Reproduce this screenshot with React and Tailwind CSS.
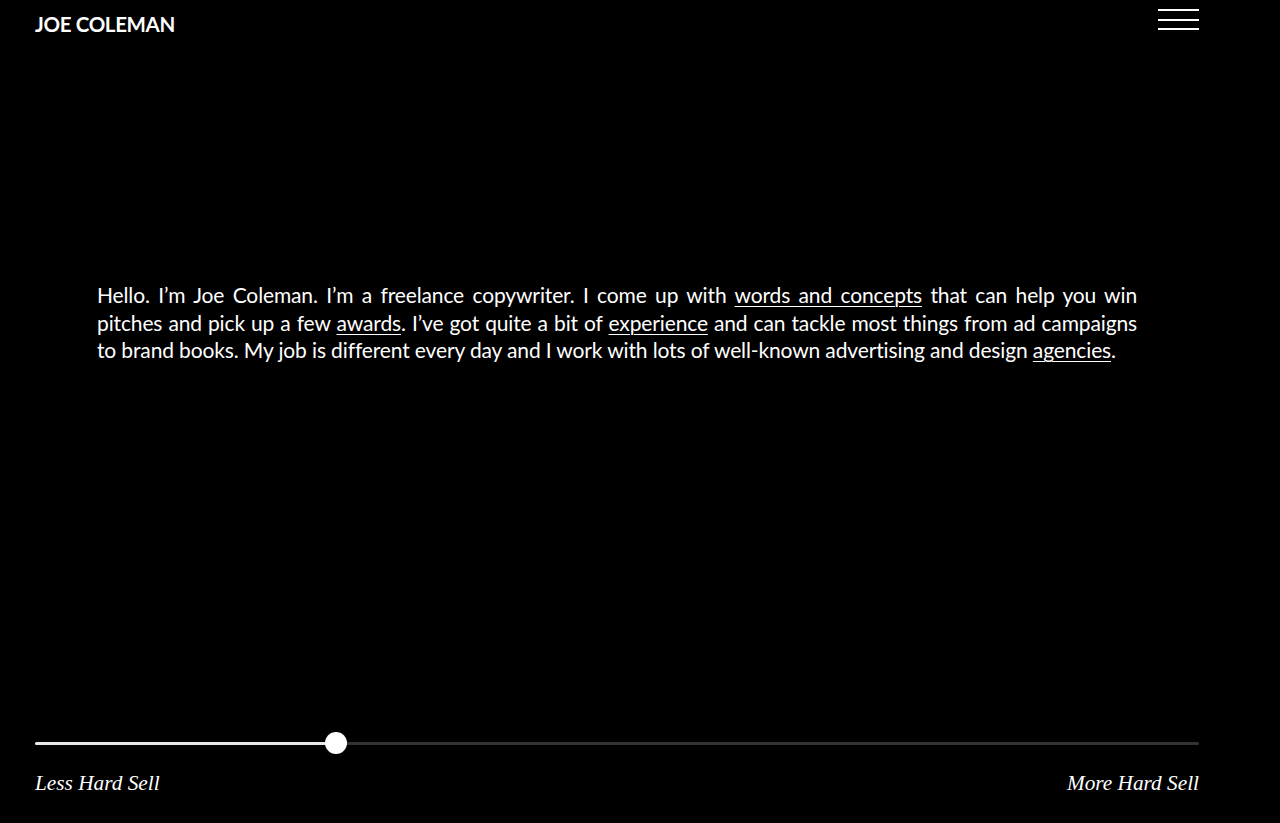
import React from "react";

const Link = ({ children }) => (
  <a href="#" className="underline underline-offset-[3px] decoration-1">
    {children}
  </a>
);

export default function App() {
  const value = 25.85; // percent

  return (
    <div className="h-[823px] w-full bg-black text-white flex flex-col overflow-hidden">
      <header className="flex items-start justify-between pl-[35px] pr-[81px]">
        <a href="#" className="mt-[11px] text-[20.5px] font-bold leading-[26px] tracking-[-0.35px] font-['Lato','Open_Sans',sans-serif]">
          JOE COLEMAN
        </a>
        <button className="mt-[9px] flex flex-col gap-[7.5px] w-[41px]" aria-label="Menu">
          <span className="block h-[2px] w-full bg-white" />
          <span className="block h-[2px] w-full bg-white" />
          <span className="block h-[2px] w-full bg-white" />
        </button>
      </header>

      <main className="px-[97px] pr-[143px] pt-[244px]">
        <p className="text-justify text-[21px] leading-[27.5px] tracking-[-0.13px] font-['Lato','Open_Sans',sans-serif]">
          Hello. I’m Joe Coleman. I’m a freelance copywriter. I come up with{" "}
          <Link>words and concepts</Link> that can help you win pitches and pick up a few{" "}
          <Link>awards</Link>. I’ve got quite a bit of <Link>experience</Link> and can tackle
          most things from ad campaigns to brand books. My job is different every day and I
          work with lots of well-known advertising and design <Link>agencies</Link>.
        </p>
      </main>

      <footer className="mt-auto pl-[35px] pr-[81px] pb-[26px]">
        <div className="relative h-[24px] flex items-center">
          <div className="h-[3px] w-full bg-[#333333] rounded-full">
            <div className="h-full bg-[#e8e8e8] rounded-full" style={{ width: `${value}%` }} />
          </div>
          <div
            className="absolute top-1/2 h-[22px] w-[22px] -translate-x-1/2 -translate-y-1/2 rounded-full bg-white"
            style={{ left: `${value}%` }}
          />
        </div>
        <div className="mt-[14px] flex justify-between italic text-[21.3px] leading-[28px] font-['Liberation_Serif',serif]">
          <span>Less Hard Sell</span>
          <span>More Hard Sell</span>
        </div>
      </footer>
    </div>
  );
}
